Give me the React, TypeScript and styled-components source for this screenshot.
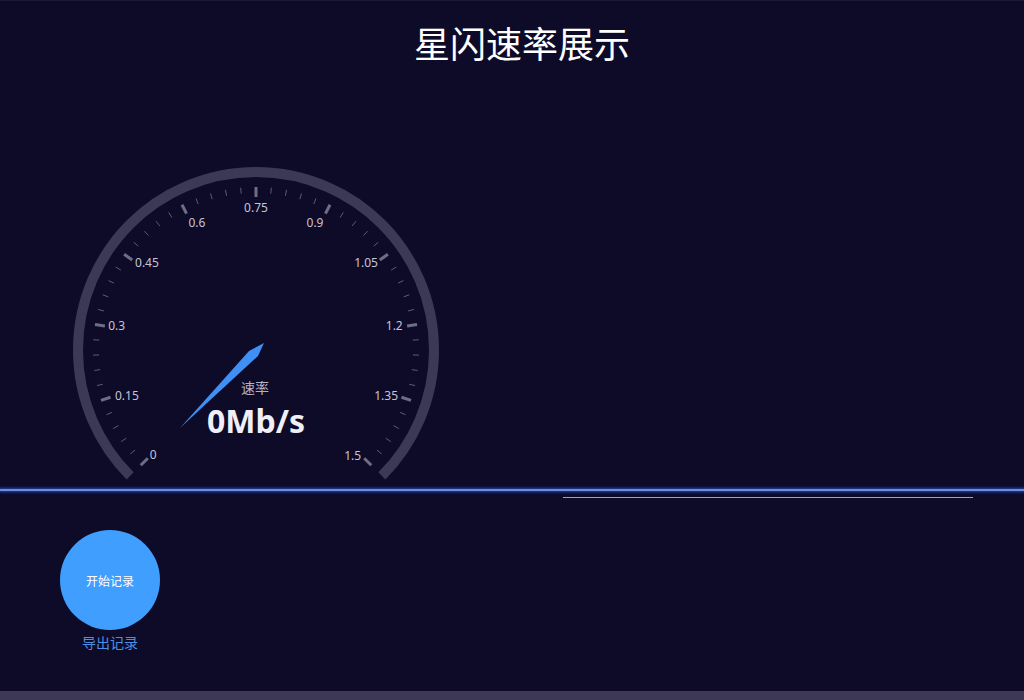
import styled, { createGlobalStyle } from 'styled-components';

// Gauge geometry (ECharts-like defaults: 225deg -> -45deg, 10 splits, 5 ticks each)
const CX = 256;
const CY = 268;
const ARC_R = 178;
const START = 225;
const SWEEP = 270;
const SPLITS = 10;
const MAX = 1.5;

// small per-label nudges so the labels sit like the echarts text alignment does
const LABEL_NUDGE: [number, number][] = [
  [-3, 5], [5, 2], [0, -2], [5, -5], [5, -2], [0, -2],
  [-5, -2], [-4, -5], [-1, -2], [-4, 2], [-3, 6],
];

const GlobalStyle = createGlobalStyle`
  html, body {
    margin: 0;
    padding: 0;
    background: #0e0b29;
  }
  body {
    font-family: "Noto Sans CJK SC", "Noto Sans", sans-serif;
  }
`;

function polar(r: number, deg: number) {
  const a = (deg * Math.PI) / 180;
  return { x: CX + r * Math.cos(a), y: CY - r * Math.sin(a) };
}

function SpeedGauge({ value }: { value: number }) {
  const s = polar(ARC_R, START);
  const e = polar(ARC_R, START - SWEEP);

  const majors = Array.from({ length: SPLITS + 1 }, (_, i) => i);
  const minors: number[] = [];
  for (let i = 0; i < SPLITS; i++) {
    for (let j = 1; j < 5; j++) minors.push(START - (i + j / 5) * (SWEEP / SPLITS));
  }

  return (
    <svg width="512" height="407" viewBox="0 0 512 407">
      <path
        d={`M ${s.x} ${s.y} A ${ARC_R} ${ARC_R} 0 1 1 ${e.x} ${e.y}`}
        fill="none"
        stroke="#3b3956"
        strokeWidth="10"
      />
      {minors.map((deg) => {
        const a = polar(163, deg);
        const b = polar(157, deg);
        return <line key={deg} x1={a.x} y1={a.y} x2={b.x} y2={b.y} stroke="#5d5b74" strokeWidth="1" />;
      })}
      {majors.map((i) => {
        const deg = START - i * (SWEEP / SPLITS);
        const a = polar(163, deg);
        const b = polar(153, deg);
        const l = polar(141, deg);
        const [nx, ny] = LABEL_NUDGE[i];
        const label = +(i * (MAX / SPLITS)).toFixed(2);
        return (
          <g key={i}>
            <line x1={a.x} y1={a.y} x2={b.x} y2={b.y} stroke="#6f6d86" strokeWidth="3" />
            <text
              x={l.x + nx}
              y={l.y + ny}
              textAnchor="middle"
              dominantBaseline="central"
              fill="#c6c4d6"
              fontSize="12"
              fontFamily='"Noto Sans", sans-serif'
            >
              {label}
            </text>
          </g>
        );
      })}
      <polygon
        points={`${CX + 8},${CY - 7} ${CX - 7},${CY + 1} ${CX - 76},${CY + 78} ${CX + 2},${CY + 6}`}
        fill="#3f8ff5"
      />
      <text x={CX - 1} y={CY + 37} textAnchor="middle" dominantBaseline="central" fill="#b4b2c8" fontSize="14">
        速率
      </text>
      <text
        x={CX}
        y={CY + 70}
        textAnchor="middle"
        dominantBaseline="central"
        fill="#f0eff7"
        fontSize="32"
        fontWeight="bold"
        fontFamily='"Noto Sans", sans-serif'
      >
        {value}Mb/s
      </text>
    </svg>
  );
}

export default function App() {
  return (
    <Page>
      <GlobalStyle />
      <Header>星闪速率展示</Header>
      <ChartRow>
        <GaugePanel>
          <SpeedGauge value={0} />
        </GaugePanel>
        <TrendPanel />
      </ChartRow>
      <Divider />
      <LowerArea>
        <Controls>
          <RecordButton type="button">开始记录</RecordButton>
          <ExportLink>导出记录</ExportLink>
        </Controls>
        <TrendAxis />
      </LowerArea>
      <ScrollTrack />
    </Page>
  );
}

const Page = styled.div`
  width: 1024px;
  height: 700px;
  display: flex;
  flex-direction: column;
  background: #0e0b29;
  border-top: 1px solid #1a1737;
  box-sizing: border-box;
  overflow: hidden;
`;

const Header = styled.h1`
  margin: 0;
  height: 81px;
  padding: 21px 0 0 20px;
  box-sizing: border-box;
  text-align: center;
  font-size: 36px;
  line-height: 40px;
  font-weight: 400;
  color: #ffffff;
`;

const ChartRow = styled.div`
  display: flex;
  height: 407px;
`;

const GaugePanel = styled.div`
  width: 512px;
  display: flex;
`;

const TrendPanel = styled.div`
  flex: 1;
`;

const Divider = styled.div`
  height: 2px;
  background: #6c8fda;
  box-shadow: 0 0 3px 1px #1f46b8;
`;

const LowerArea = styled.div`
  flex: 1;
  display: flex;
`;

const Controls = styled.div`
  width: 563px;
  padding: 39px 0 0 60px;
  box-sizing: border-box;
  display: flex;
  flex-direction: column;
  align-items: flex-start;
`;

const RecordButton = styled.button`
  width: 100px;
  height: 100px;
  border: none;
  border-radius: 50%;
  background: #409eff;
  color: #ffffff;
  font-family: "Noto Sans CJK SC", sans-serif;
  font-size: 12px;
  padding: 0;
  cursor: pointer;
`;

const ExportLink = styled.span`
  width: 100px;
  margin-top: 2px;
  text-align: center;
  font-size: 14px;
  line-height: 20px;
  color: #4a90e2;
  cursor: pointer;
`;

const TrendAxis = styled.div`
  width: 410px;
  height: 1px;
  margin-top: 6px;
  background: #a3a1b8;
`;

const ScrollTrack = styled.div`
  height: 9px;
  background: #3c3856;
`;
